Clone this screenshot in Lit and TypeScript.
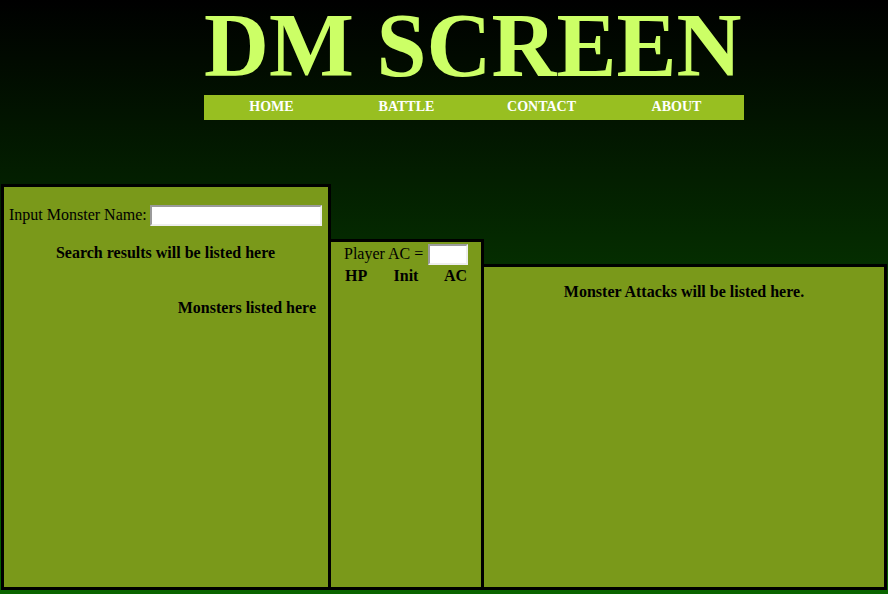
import { LitElement, html, css } from "lit";
import { customElement, state } from "lit/decorators.js";

const PAGES = ["Home", "Battle", "Contact", "About"];

@customElement("app-root")
export class AppRoot extends LitElement {
  @state() private monsterName = "";
  @state() private playerAc = "";

  static styles = css`
    :host {
      display: flex;
      flex-direction: column;
      box-sizing: border-box;
      min-height: 100vh;
      padding: 0 1px 4px;
      font: 16px/18px "Liberation Serif", serif;
      color: #000;
      background: linear-gradient(#000, #0a6600);
    }
    .header {
      width: 540px;
      max-width: 100%;
      margin: 0 auto;
      padding: 0 0 64px 60px;
    }
    .title {
      margin: 0 0 4px;
      font-size: 90px;
      line-height: 91px;
      color: #ccff66;
      white-space: nowrap;
    }
    .menu {
      display: grid;
      grid-template-columns: repeat(4, 1fr);
      margin: 0;
      padding: 0;
      list-style: none;
    }
    .link {
      display: block;
      padding: 4px 4px 5px;
      font-size: 14px;
      font-weight: bold;
      line-height: 16px;
      text-align: center;
      text-transform: uppercase;
      text-decoration: none;
      color: #fff;
      background: #98bf21;
    }
    .link:hover {
      background: #7a991a;
    }
    .board {
      display: flex;
      flex: 1;
    }
    .panel {
      box-sizing: border-box;
      border: 3px solid #000;
      background: #7a991a;
    }
    .search {
      width: 330px;
      padding: 18px 6px 18px 5px;
    }
    .stats {
      width: 153px;
      margin-top: 55px;
      border-left: 0;
      padding: 2px 13px;
    }
    .attacks {
      flex: 1;
      margin-top: 80px;
      border-left: 0;
      padding: 16px 8px;
    }
    .field {
      display: flex;
      align-items: flex-start;
      justify-content: space-between;
      line-height: 20px;
      white-space: nowrap;
    }
    .input {
      box-sizing: border-box;
      height: 21px;
      margin: 0;
      padding: 1px;
      font: 13px "Liberation Sans", sans-serif;
      border: 2px solid;
      border-color: #9a9a9a #eee #eee #9a9a9a;
      border-radius: 0;
      background: #fff;
    }
    .name {
      width: 172px;
    }
    .ac {
      width: 40px;
    }
    .note {
      margin: 0;
      font-weight: bold;
      text-align: center;
    }
    .results {
      margin-top: 18px;
    }
    .monsters {
      margin-top: 37px;
      padding-right: 6px;
      text-align: right;
    }
    .table {
      width: 100%;
      margin-top: 2px;
      border-collapse: collapse;
      table-layout: fixed;
    }
    .table th {
      padding: 0 1px;
      text-align: center;
    }
    .table th:first-child {
      text-align: left;
    }
    .table th:last-child {
      text-align: right;
    }
  `;

  render() {
    return html`
      <header class="header">
        <h1 class="title">DM SCREEN</h1>
        <nav>
          <ul class="menu">
            ${PAGES.map(
              (page) => html`<li><a class="link" href="#${page.toLowerCase()}">${page}</a></li>`
            )}
          </ul>
        </nav>
      </header>
      <main class="board">
        <section class="panel search">
          <div class="field">
            <label for="monster-name">Input Monster Name:</label>
            <input
              id="monster-name"
              class="input name"
              type="text"
              .value=${this.monsterName}
              @input=${(e: Event) => (this.monsterName = (e.target as HTMLInputElement).value)}
            />
          </div>
          <p class="note results">Search results will be listed here</p>
          <p class="note monsters">Monsters listed here</p>
        </section>
        <section class="panel stats">
          <div class="field">
            <label for="player-ac">Player AC =</label>
            <input
              id="player-ac"
              class="input ac"
              type="text"
              .value=${this.playerAc}
              @input=${(e: Event) => (this.playerAc = (e.target as HTMLInputElement).value)}
            />
          </div>
          <table class="table">
            <thead>
              <tr>
                <th scope="col">HP</th>
                <th scope="col">Init</th>
                <th scope="col">AC</th>
              </tr>
            </thead>
          </table>
        </section>
        <section class="panel attacks">
          <p class="note">Monster Attacks will be listed here.</p>
        </section>
      </main>
    `;
  }
}
